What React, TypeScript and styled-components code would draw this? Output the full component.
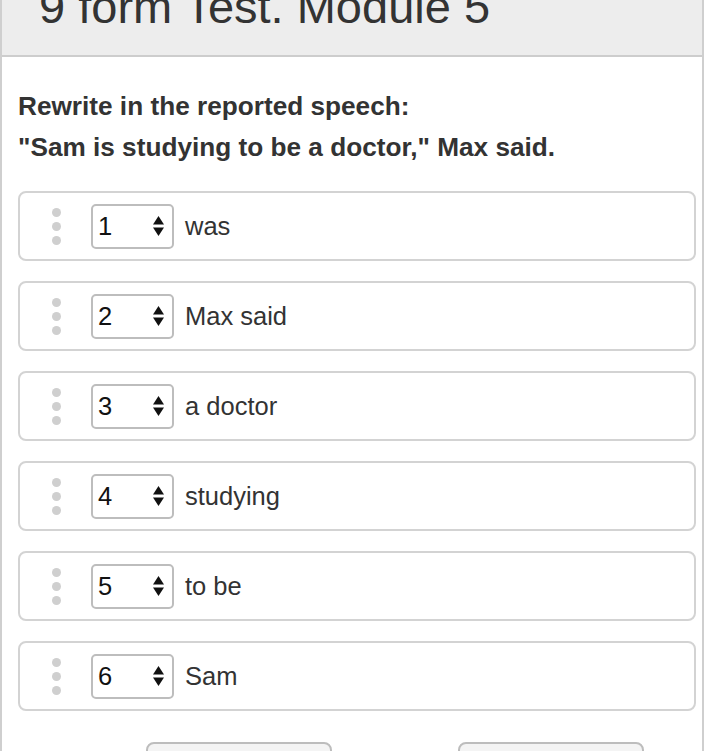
import React from "react";
import styled, { createGlobalStyle } from "styled-components";

const Global = createGlobalStyle`
  html, body { margin: 0; padding: 0; background: #fff; }
  body { font-family: "Liberation Sans", Arial, Helvetica, sans-serif; color: #333; overflow: hidden; }
`;

const Page = styled.div`
  border-left: 2px solid #cfcfcf;
  border-right: 2px solid #cfcfcf;
  min-height: 751px;
  box-sizing: border-box;
`;

const Header = styled.header`
  height: 55px;
  overflow: hidden;
  background: #ededed;
  border-bottom: 2px solid #cdcdcd;
  padding-left: 37px;
`;

const Title = styled.h1`
  margin: -17px 0 0;
  font-size: 47px;
  line-height: 47px;
  font-weight: 400;
  color: #333;
  white-space: nowrap;
`;

const Body = styled.main`
  padding: 29px 6px 0 16px;
`;

const Prompt = styled.p`
  margin: 0;
  font-size: 26.2px;
  line-height: 41px;
  font-weight: 700;
  color: #333;
`;

const List = styled.div`
  margin-top: 23px;
  display: flex;
  flex-direction: column;
  gap: 20px;
`;

const Row = styled.div`
  height: 70px;
  box-sizing: border-box;
  border: 2px solid #d3d3d3;
  border-radius: 8px;
  display: flex;
  align-items: center;
  padding-left: 32px;
`;

const Handle = styled.div`
  display: flex;
  flex-direction: column;
  gap: 5px;
  width: 9px;
  margin-right: 30px;
`;

const Dot = styled.span`
  width: 9px;
  height: 9px;
  border-radius: 50%;
  background: #cfcfcf;
`;

const SelectBox = styled.div`
  width: 83px;
  height: 45px;
  box-sizing: border-box;
  border: 2px solid #bdbdbd;
  border-radius: 5px;
  display: flex;
  align-items: center;
  justify-content: space-between;
  padding: 0 8px 0 5px;
  margin-right: 11px;
  font-size: 25.5px;
  color: #111;
  background: #fff;
`;

const Label = styled.span`
  font-size: 25.5px;
  color: #333;
`;

const Buttons = styled.div`
  margin-top: 31px;
  padding-left: 128px;
  display: flex;
  gap: 126px;
`;

const Button = styled.button`
  width: 186px;
  height: 46px;
  border: 2px solid #bdbdbd;
  border-radius: 8px;
  background: #f4f4f4;
  font-family: inherit;
  font-size: 24px;
  color: #333;
`;

const Arrows = () => (
  <svg width="11" height="20" viewBox="0 0 11 20">
    <path d="M5.5 0 L11 8.5 L0 8.5 Z" fill="#111" />
    <path d="M0 11.5 L11 11.5 L5.5 20 Z" fill="#111" />
  </svg>
);

const items = ["was", "Max said", "a doctor", "studying", "to be", "Sam"];

export default function App() {
  return (
    <Page>
      <Global />
      <Header>
        <Title>9 form Test. Module 5</Title>
      </Header>
      <Body>
        <Prompt>Rewrite in the reported speech:</Prompt>
        <Prompt>"Sam is studying to be a doctor," Max said.</Prompt>
        <List>
          {items.map((t, i) => (
            <Row key={t}>
              <Handle>
                <Dot />
                <Dot />
                <Dot />
              </Handle>
              <SelectBox>
                <span>{i + 1}</span>
                <Arrows />
              </SelectBox>
              <Label>{t}</Label>
            </Row>
          ))}
        </List>
        <Buttons>
          <Button aria-label="Check" />
          <Button aria-label="Next" />
        </Buttons>
      </Body>
    </Page>
  );
}
